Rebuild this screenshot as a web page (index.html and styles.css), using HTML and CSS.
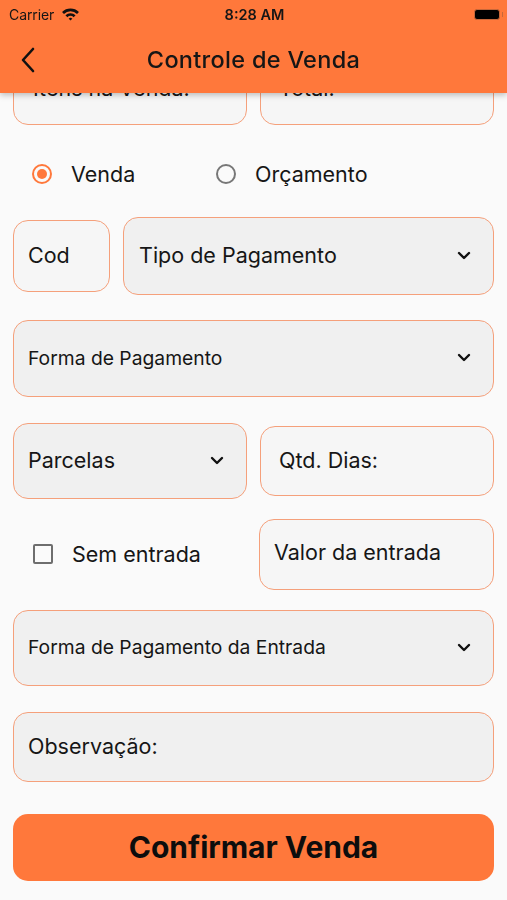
FILE: index.html
```html
<!DOCTYPE html>
<html lang="pt-BR">
<head>
  <meta charset="UTF-8" />
  <meta name="viewport" content="width=device-width, initial-scale=1.0"/>
  <title>Controle de Venda</title>
  <link rel="stylesheet" href="styles.css">
</head>
<body>

  <header class="top-bar">
    <div class="status-bar">
      <div class="carrier">
        Carrier
        <svg class="wifi" width="19" height="14" viewBox="0 0 18 13">
          <path d="M1 4.6 A11.5 11.5 0 0 1 17 4.6 L15.2 6.4 A9 9 0 0 0 2.8 6.4 Z" fill="#111"/>
          <path d="M4.2 7.8 A7 7 0 0 1 13.8 7.8 L12 9.6 A4.5 4.5 0 0 0 6 9.6 Z" fill="#111"/>
          <path d="M7.3 10.9 A2.4 2.4 0 0 1 10.7 10.9 L9 12.6 Z" fill="#111"/>
        </svg>
      </div>
      <div class="clock">8:28 AM</div>
      <div class="battery"><span class="battery-level"></span></div>
    </div>
    <div class="nav-bar">
      <svg class="back" width="16" height="26" viewBox="0 0 16 26">
        <path d="M13 2 L3 13 L13 24" fill="none" stroke="#111" stroke-width="2.6" stroke-linecap="round" stroke-linejoin="round"/>
      </svg>
      <h1>Controle de Venda</h1>
    </div>
  </header>

  <main class="form">
    <div class="row row-first">
      <div class="field half"><span class="label">Itens na Venda:</span></div>
      <div class="field half field-right"><span class="label">Total:</span></div>
    </div>

    <div class="row radio-row">
      <label class="radio checked"><span class="dot"></span>Venda</label>
      <label class="radio"><span class="dot"></span>Orçamento</label>
    </div>

    <div class="row row-tipo">
      <div class="field cod"><span class="label">Cod</span></div>
      <div class="field select tipo">
        <span class="label">Tipo de Pagamento</span>
        <svg class="chevron" width="14" height="9" viewBox="0 0 14 9"><path d="M2 2 L7 7 L12 2" fill="none" stroke="#111" stroke-width="2.4" stroke-linecap="round" stroke-linejoin="round"/></svg>
      </div>
    </div>

    <div class="field select wide forma">
      <span class="label small">Forma de Pagamento</span>
      <svg class="chevron" width="14" height="9" viewBox="0 0 14 9"><path d="M2 2 L7 7 L12 2" fill="none" stroke="#111" stroke-width="2.4" stroke-linecap="round" stroke-linejoin="round"/></svg>
    </div>

    <div class="row row-parcelas">
      <div class="field select half parcelas">
        <span class="label">Parcelas</span>
        <svg class="chevron" width="14" height="9" viewBox="0 0 14 9"><path d="M2 2 L7 7 L12 2" fill="none" stroke="#111" stroke-width="2.4" stroke-linecap="round" stroke-linejoin="round"/></svg>
      </div>
      <div class="field half dias"><span class="label">Qtd. Dias:</span></div>
    </div>

    <div class="row row-entrada">
      <label class="check"><span class="box"></span>Sem entrada</label>
      <div class="field half valor"><span class="label">Valor da entrada</span></div>
    </div>

    <div class="field select wide forma-entrada">
      <span class="label small">Forma de Pagamento da Entrada</span>
      <svg class="chevron" width="14" height="9" viewBox="0 0 14 9"><path d="M2 2 L7 7 L12 2" fill="none" stroke="#111" stroke-width="2.4" stroke-linecap="round" stroke-linejoin="round"/></svg>
    </div>

    <div class="field wide obs"><span class="label">Observação:</span></div>

    <button class="confirm">Confirmar Venda</button>
  </main>

</body>
</html>
```

FILE: styles.css
```css
html, body {
  margin: 0;
  padding: 0;
  background-color: #fafafa;
  font-family: Inter, "Noto Sans", Arial, sans-serif;
  color: #161616;
  height: 100%;
  overflow: hidden;
}

.top-bar {
  position: fixed;
  top: 0;
  left: 0;
  right: 0;
  height: 93px;
  background-color: #ff783b;
  box-shadow: 0 2px 6px rgba(0,0,0,0.25);
  z-index: 10;
}

.status-bar {
  height: 28px;
  display: flex;
  align-items: center;
  justify-content: space-between;
  padding: 0 7px 0 9px;
}

.carrier {
  width: 120px;
  display: flex;
  align-items: center;
  gap: 7px;
  font-size: 14px;
  letter-spacing: -0.1px;
}

.clock {
  font-size: 14.5px;
  font-weight: 600;
}

.battery {
  width: 120px;
  display: flex;
  justify-content: flex-end;
}

.battery-level {
  width: 24px;
  height: 9px;
  background: #000;
  border: 1.5px solid #c8683a;
  border-radius: 3px;
  position: relative;
}

.battery-level::after {
  content: "";
  position: absolute;
  right: -4px;
  top: 2px;
  width: 1.5px;
  height: 5px;
  background: #c8683a;
}

.nav-bar {
  height: 65px;
  display: flex;
  align-items: center;
  justify-content: center;
  position: relative;
}

.back {
  position: absolute;
  left: 20px;
  top: 19px;
}

h1 {
  margin: 0;
  font-size: 23.5px;
  font-weight: 500;
  letter-spacing: 0.3px;
  margin-bottom: 2px;
}

.form {
  display: flex;
  flex-direction: column;
  padding: 0 13px;
}

.row {
  display: flex;
  align-items: center;
  gap: 13px;
}

.field {
  box-sizing: border-box;
  display: flex;
  align-items: center;
  background-color: #f6f6f6;
  border: 1.5px solid #f5a07b;
  border-radius: 15px;
  padding: 0 14px 2px;
  font-size: 21.5px;
  white-space: nowrap;
}

.field.select {
  background-color: #f0f0f0;
  justify-content: space-between;
  padding-right: 22px;
}

.label.small {
  font-size: 19.3px;
}

.half {
  width: 234px;
  flex: none;
}

.wide {
  width: 100%;
}

.row-first {
  margin-top: 53px;
}

.row-first .field {
  height: 72px;
  padding-left: 19px;
}

.row-first .field-right {
  padding-left: 18px;
}

.radio-row {
  margin-top: 25px;
  height: 48px;
  gap: 0;
  padding-bottom: 2px;
}

.radio {
  display: flex;
  align-items: center;
  font-size: 21.5px;
  width: 184px;
  padding-left: 19px;
  box-sizing: border-box;
}

.radio .dot {
  width: 16px;
  height: 16px;
  border: 2.5px solid #777;
  border-radius: 50%;
  margin-right: 19px;
  box-sizing: content-box;
  position: relative;
}

.radio.checked .dot {
  border-color: #ff783b;
}

.radio.checked .dot::after {
  content: "";
  position: absolute;
  left: 3px;
  top: 3px;
  width: 10px;
  height: 10px;
  border-radius: 50%;
  background: #ff783b;
}

.row-tipo {
  margin-top: 17px;
  height: 78px;
}

.cod {
  width: 97px;
  height: 72px;
  flex: none;
}

.tipo {
  flex: 1;
  height: 78px;
  padding-left: 15px;
}

.forma {
  margin-top: 25px;
  height: 77px;
}

.row-parcelas {
  margin-top: 26px;
  height: 76px;
}

.parcelas {
  height: 76px;
  padding-right: 20px;
}

.dias {
  height: 70px;
  padding-left: 18px;
}

.row-entrada {
  margin-top: 20px;
  height: 71px;
}

.check {
  width: 233px;
  flex: none;
  display: flex;
  align-items: center;
  font-size: 21.5px;
  padding-left: 20px;
  padding-bottom: 1px;
  box-sizing: border-box;
}

.check .box {
  width: 16px;
  height: 16px;
  border: 2.5px solid #6e6e6e;
  border-radius: 2px;
  margin-right: 19px;
}

.valor {
  height: 71px;
  width: 235px;
  padding-left: 14px;
  padding-bottom: 6px;
}

.forma-entrada {
  margin-top: 20px;
  height: 76px;
}

.obs {
  margin-top: 26px;
  height: 70px;
  background-color: #f0f0f0;
}

.confirm {
  margin-top: 32px;
  height: 67px;
  width: 100%;
  border: none;
  border-radius: 15px;
  background-color: #ff783b;
  font-family: Inter, "Noto Sans", Arial, sans-serif;
  font-size: 30px;
  font-weight: 700;
  color: #0d0d0d;
  cursor: pointer;
  padding-bottom: 2px;
}
```
